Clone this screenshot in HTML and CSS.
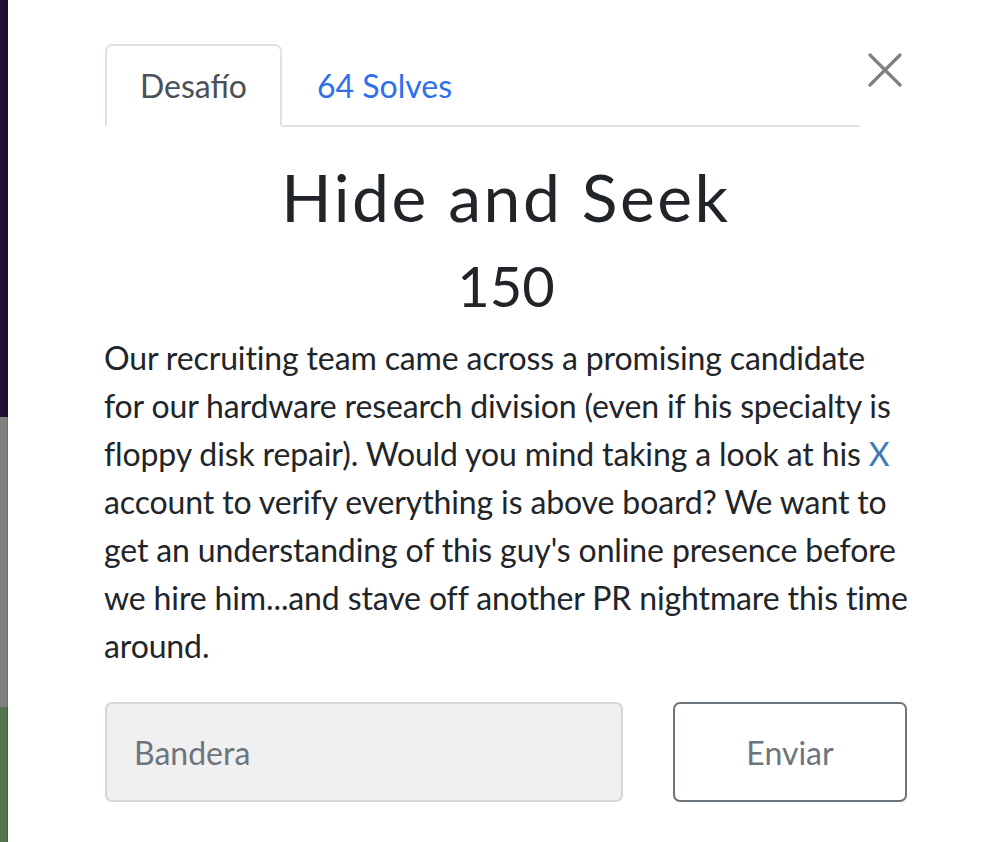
FILE: index.html
```html
<!DOCTYPE html>
<html lang="es">
<head>
<meta charset="utf-8">
<title>Hide and Seek</title>
<link rel="stylesheet" href="styles.css">
</head>
<body>
<div class="page">
  <div class="backdrop">
    <div class="seg seg-dark"></div>
    <div class="seg seg-gray"></div>
    <div class="seg seg-green"></div>
  </div>
  <div class="modal">
    <div class="content">
      <div class="head">
        <ul class="tabs">
          <li class="tab active">Desafío</li>
          <li class="tab link">64 Solves</li>
        </ul>
        <button class="close" aria-label="Close">
          <svg width="34" height="34" viewBox="0 0 34 34"><path d="M2 2 L32 32 M32 2 L2 32" stroke="#808080" stroke-width="3.2" stroke-linecap="round" fill="none"/></svg>
        </button>
      </div>
      <h1 class="title">Hide and Seek</h1>
      <h2 class="value">150</h2>
      <p class="desc">Our recruiting team came across a promising candidate for our hardware research division (even if his specialty is floppy disk repair). Would you mind taking a look at his <a class="xlink" href="#">X</a> account to verify everything is above board? We want to get an understanding of this guy's online presence before we hire him...and stave off another PR nightmare this time around.</p>
      <form class="submit-row">
        <input class="flag" type="text" placeholder="Bandera">
        <button class="send" type="button">Enviar</button>
      </form>
    </div>
  </div>
</div>
</body>
</html>
```
FILE: styles.css
```css
html, body {
  margin: 0;
  padding: 0;
  background: #ffffff;
}
body {
  font-family: Lato, "Open Sans", sans-serif;
  color: #212529;
}
.page {
  display: flex;
  width: 990px;
  height: 842px;
  overflow: hidden;
}
.backdrop {
  width: 8px;
  display: flex;
  flex-direction: column;
  flex-shrink: 0;
}
.seg { border-right: 1px solid rgba(0,0,0,0.15); }
.seg-dark { height: 417px; background: #1e0e32; }
.seg-gray { height: 290px; background: #808080; }
.seg-green { flex: 1; background: #547250; }
.modal {
  flex: 1;
  background: #fff;
}
.content {
  width: 802px;
  margin-left: 97px;
  padding-top: 44px;
}
.head {
  display: flex;
  align-items: flex-start;
}
.tabs {
  flex: 1;
  display: flex;
  list-style: none;
  margin: 0;
  padding: 0;
  border-bottom: 2px solid #dee2e6;
}
.tab {
  height: 83px;
  box-sizing: border-box;
  padding: 0 33px;
  display: flex;
  align-items: center;
  font-size: 32px;
  border: 2px solid transparent;
  border-top-left-radius: 7px;
  border-top-right-radius: 7px;
  margin-bottom: -2px;
}
.tab.active {
  color: #495057;
  border-color: #dee2e6 #dee2e6 #fff;
  background: #fff;
}
.tab.link { color: #2f6fec; }
.close {
  width: 47px;
  height: 40px;
  margin-top: 6px;
  padding: 0 0 0 8px;
  border: 0;
  background: none;
  display: flex;
  align-items: center;
  justify-content: flex-start;
}
.title {
  margin: 30px 0 0;
  text-align: center;
  font-size: 66px;
  font-weight: 400;
  letter-spacing: 2.5px;
  line-height: 80px;
}
.value {
  margin: 17px 0 0;
  text-align: center;
  font-size: 56px;
  font-weight: 400;
  line-height: 64px;
}
.desc {
  margin: 16px -3px 0 -1px;
  font-size: 32px;
  line-height: 48px;
  letter-spacing: -0.13px;
}
.xlink { color: #3b79b9; text-decoration: none; }
.submit-row {
  display: flex;
  gap: 50px;
  margin-top: 32px;
}
.flag {
  width: 518px;
  height: 100px;
  box-sizing: border-box;
  background: #f0f0f0;
  border: 2px solid #d3d7dc;
  border-radius: 7px;
  padding: 0 27px;
  font-family: Lato, sans-serif;
  font-size: 32px;
  color: #495057;
}
.flag::placeholder { color: #6c757d; }
.send {
  width: 234px;
  height: 100px;
  box-sizing: border-box;
  background: #fff;
  border: 2px solid #6c757d;
  border-radius: 7px;
  font-family: Lato, sans-serif;
  font-size: 32px;
  color: #6c757d;
}
```
